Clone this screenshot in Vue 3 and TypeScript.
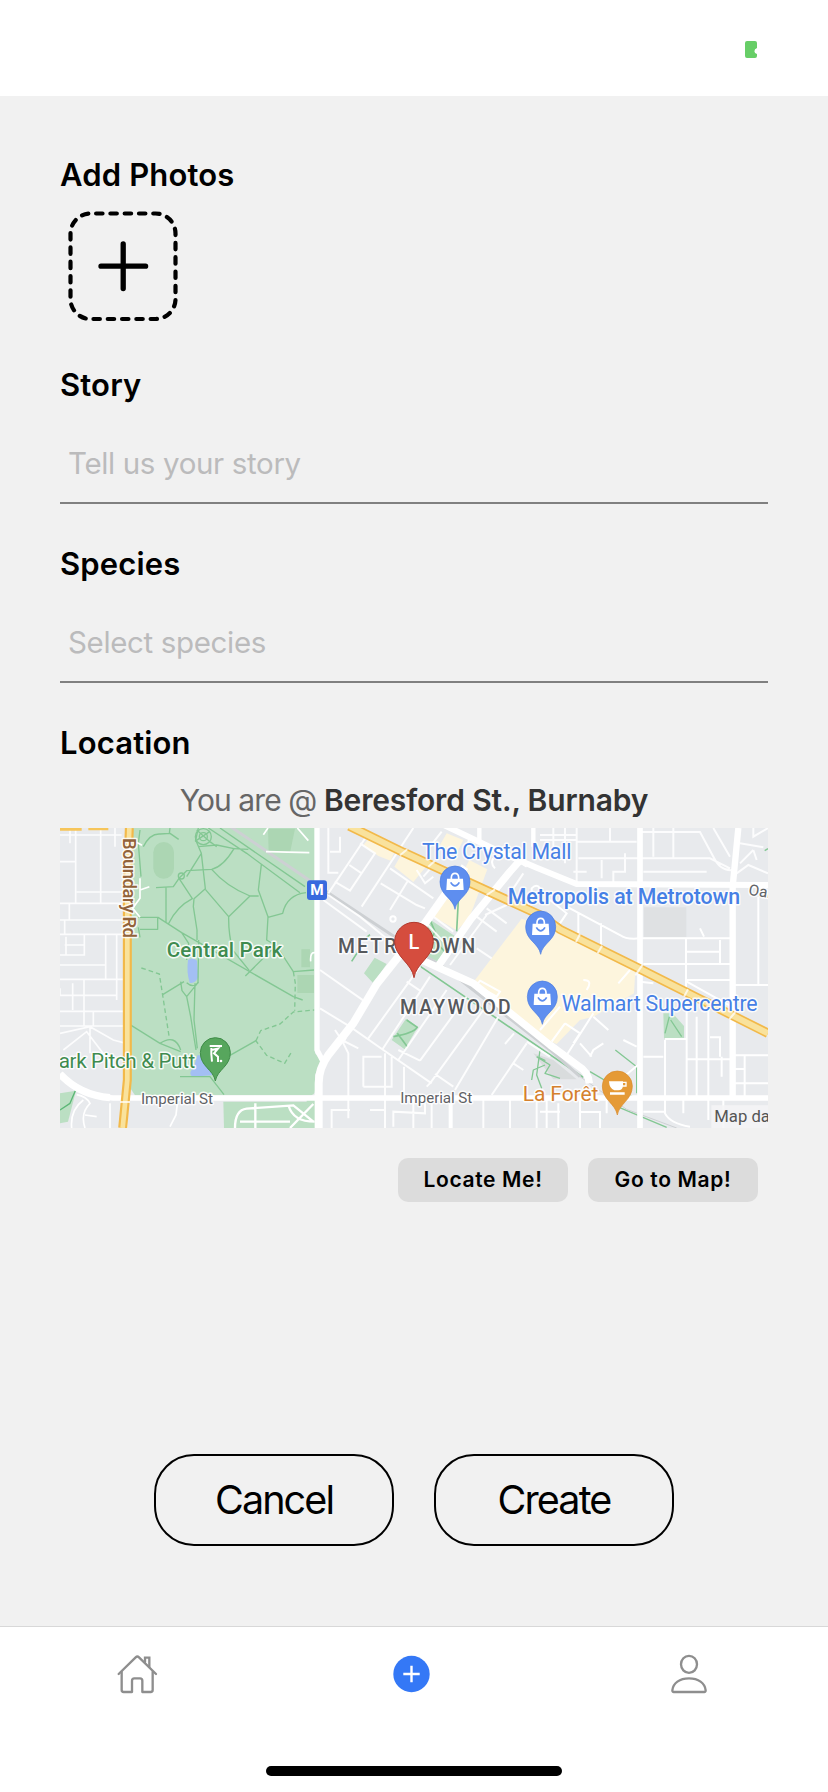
<script setup lang="ts">
import { ref } from 'vue'

const story = ref('')
const species = ref('')
const address = ref('Beresford St., Burnaby')

interface ShopPin {
  x: number
  y: number
}

const shopPins: ShopPin[] = [
  { x: 1185, y: 185 },
  { x: 1442, y: 320 },
  { x: 1447, y: 530 },
]
</script>

<template>
  <div class="screen">
    <header class="status">
      <svg class="battery" viewBox="0 0 12 17" aria-hidden="true">
        <path d="M2 0h8q2 0 2 2v5q-2.600 1-2.600 3.200T12 13v2q0 2-2 2H2q-2 0-2-2V2Q0 0 2 0z" fill="#67ce67" />
      </svg>
    </header>

    <main class="form">
      <h2 class="label">Add Photos</h2>
      <button class="add" aria-label="Add photo">
        <svg viewBox="60 195 130 140">
          <path
            d="M96.100 213.500H155.500A20 20 0 0 1 175.500 233.500V299A20 20 0 0 1 155.500 319H90.500A20 20 0 0 1 70.500 299V233.500A20 20 0 0 1 90.500 213.500Z"
            pathLength="270" fill="none" stroke="#000" stroke-width="4.200" stroke-linecap="round" stroke-dasharray="4.500 5.500"
          />
          <path d="M123.200 244v44.500M101 266.200h44.600" fill="none" stroke="#000" stroke-width="5.300" stroke-linecap="round" />
        </svg>
      </button>

      <h2 class="label">Story</h2>
      <input v-model="story" class="field" placeholder="Tell us your story" />

      <h2 class="label next">Species</h2>
      <input v-model="species" class="field" placeholder="Select species" />

      <h2 class="label next">Location</h2>
      <p class="where"><span class="you">You are @ </span><strong>{{ address }}</strong></p>

      <svg class="map" viewBox="0 24 2124 900">
        <rect y="24" width="2124" height="900" fill="#e8eaed" />
        <!-- parks and water -->
        <g fill="#bbdfc3">
          <path d="M210 24H765V812Q765 826 745 826H225L208 800Z" />
          <path d="M490 845H768V924H492Z" />
          <path d="M765 24V700L785 722L765 765Z" />
          <path d="M0 820L48 812L24 905L0 910Z" />
          <path d="M766 830V924H740V840Z" />
          <path d="M912 460L944 413L980 432L940 490ZM995 660L1038 596L1074 620L1034 688ZM1095 320L1112 300L1184 348L1132 424L1104 412Z" />
          <path d="M1810 580H1838L1872 618V655H1812Z" />
        </g>
        <g fill="#acd6b3">
          <rect x="280" y="66" width="62" height="110" rx="31" />
          <path d="M624 26H705L690 98H626ZM724 388h26v54h-26zM712 465h50v54h-50z" />
        </g>
        <g fill="#a3bff4">
          <path d="M384 420q14-10 27 2l4 50q-10 20-26 16q-10-30-5-68z" />
          <path d="M412 706h24l16 48q12 0 3 12l-58 4q-14-10 4-26z" />
        </g>
        <g fill="#fdf5dd">
          <path d="M910 75L932 48L1010 82L992 122L955 108ZM1003 140L1032 90L1108 128L1060 186ZM1122 290L1170 222L1244 250L1192 332ZM1200 175L1228 120L1282 148L1240 262L1225 300L1190 330L1120 290ZM1140 75L1160 40L1210 60L1190 100Z" />
          <path d="M1245 480L1385 296L1500 335L1726 452L1722 520L1600 590L1560 600L1490 672L1440 650Z" />
        </g>
        <path d="M1752 262h127v90H1752z" fill="#dfe1e3" />
        <path d="M1420 700l60 20l70 58l-70 0z" fill="#d9dcdd" />

        <!-- park footpaths -->
        <g fill="none" stroke="#83c793" stroke-width="4" stroke-linejoin="round">
          <path d="M240 30L235 70L243 170M250 80Q270 40 300 42L330 40L356 58M415 24L407 60L424 100L436 206L402 236L400 260L411 330V360M330 24L328 40M288 203L340 200L357 175L380 152L455 148Q490 140 522 86L470 75L415 80M424 100L380 170M357 175L397 236Q350 260 325 312M318 203V306M235 292H294L365 338L700 530L728 540M240 328H293V292M235 322l5 30M365 338L386 370L380 420M416 360L414 490" />
          <path d="M436 208L506 290Q505 340 518 390L568 452M506 290L570 228H596M455 148Q500 200 570 228M604 134L595 210L624 290L620 360L650 378L700 455L762 450M624 292L668 280Q680 225 738 218M640 385L556 468M445 24L560 100L720 218M480 24L735 200M522 86L565 88" />
          <circle cx="430" cy="50" r="24" />
          <circle cx="430" cy="50" r="12" />
          <path d="M410 30L455 70M405 64L450 34M452 66L470 80" />
          <circle cx="364" cy="168" r="9" />
          <path d="M380 488q20 18 34 0L380 530L392 590L408 690M405 490L402 600L412 685M308 524L372 485M210 614L300 670L362 695M300 670Q345 640 362 690M362 485L366 512L380 530M510 706L588 662M360 770H450L492 824" />
          <path d="M244 444L298 462L328 654M588 662L602 632L660 612L700 576L764 570M586 660L620 706L674 730L696 694M700 455L706 490L704 572" stroke-dasharray="14 9" />
          <path d="M46 812L30 850L0 870M765 176h10M765 446h10M765 568h10" stroke="#5cb777" />
          <path d="M1110 300L1125 335L1115 355L1160 400M1190 334L1195 240M875 424L892 398M920 352l10-8M1000 650Q1060 640 1072 622L1040 600M1012 640L1042 680M1082 440L1570 772" stroke-width="5" />
          <path d="M1590 755L1735 840M1666 690L1730 740V820M1672 860L1820 922M1430 710L1470 735L1455 760L1500 775M1455 735L1420 750L1415 780M1440 690L1430 765L1445 805M1828 590L1815 640M1832 600L1865 650" />
          <path d="M1436 712L1456 722M2114 92l10-6" />
        </g>

        <!-- rail -->
        <g fill="none" stroke="#cdd0d3">
          <path d="M500 12L750 182L1000 348L1160 448L1470 690L1560 770" stroke-width="9" />
          <path d="M1560 770L1700 868L1850 924" stroke-width="3" />
        </g>

        <!-- side streets -->
        <g fill="none" stroke="#fff" stroke-width="5">
          <path d="M47 24V248M122 24V248M0 45H185M0 125H48M50 216H190M0 250H185M0 300H190M0 343H190M14 300V343M28 250V300M73 345V405H0M18 350V405M137 345V476M170 345V540M0 435H137M0 478H198M0 526H170M0 574H198M0 505V526M38 490V570M72 478V620M0 618H198M165 24V80M14 375H72M0 640L90 620L160 660L198 670M90 620V700M10 690L80 635L160 740M30 24V70M100 574V618" stroke-opacity=".85" />
          <path d="M228 66l18 10M240 175V235L218 265L240 292M240 210l28-10M610 44L624 24M618 95L748 98M712 24L745 62M752 424Q750 395 765 398" />
          <path d="M50 824Q80 830 90 850Q60 880 75 924M35 924Q30 870 70 840M150 850V924M200 850V924M352 850L348 885L330 920M75 885L110 890" />
          <path d="M525 924Q525 870 560 866L700 856L760 905M586 850V924M686 858Q700 905 764 905M760 852L690 924M540 905H690" stroke-width="7" />
        </g>
        <g fill="none" stroke="#fff" stroke-width="6" transform="translate(750 0)">
          <path d="M55 220L170 48M74 185L120 212L195 100L150 70M118 135L155 160M155 260L310 24M240 145L370 235M240 270L295 180M212 190L320 255L345 265M55 24V158H85M60 95H90V50M55 225L150 290L235 360M40 240L170 335M30 450L165 545M30 565L120 620L220 690L365 790M118 628L100 670L115 700V835M175 655L330 440M216 690L360 470M265 720L410 510M360 790L520 570M435 810L565 590M545 825L650 670M330 722L470 530M290 485L330 512M265 690L330 722M375 762L430 800M365 785L350 800M650 665L720 710M610 730L640 750M585 672L612 640M400 365L350 310M370 290L430 335M420 435L530 285M500 385L545 415M500 290L560 335M530 265L590 310M525 285L590 255M640 160L600 220M480 50L470 80M395 35L360 80M420 840V924M365 845V924M520 840V924M600 840V924M680 840V924M225 700V924M282 740V835M160 800V710H215M160 800H245V710M65 924V870H120M115 835V895M250 920V875L345 880V850M310 840V924M180 870H225M75 630L95 660L145 685M320 150L345 190L370 170M340 170L375 130" stroke-opacity=".88" />
          <circle cx="249" cy="297" r="8" />
          <path d="M510 482L570 515L560 530L500 495ZM585 100L650 140M690 205Q680 190 665 205V230M550 115Q540 130 555 145" />
        </g>
        <g fill="none" stroke="#fff" stroke-width="6" transform="translate(1440 0)">
          <path d="M0 45H110M110 24V190M115 115H510L570 145M300 36H480L520 110Q540 155 580 150M520 24L570 110M600 70L670 82M340 24V110M400 24V115M110 65H290M140 155H100M220 190V155H255V100M185 120V175M310 155H500M210 24V65M640 24V50L684 24M640 90L600 130M640 90L650 120M590 160L625 135L684 160M0 60H110M40 24V90M75 24V130" stroke-opacity=".85" />
          <path d="M80 260L240 345Q260 360 300 355H578M115 280V345M183 310V380M30 240L80 280L60 310M438 355V510M310 432H578M440 395H540M540 360V435M440 480H578M440 485L575 560M300 485L340 490M655 230V495M580 495H684M470 590V835M440 560V835M505 560V835M375 660V880Q390 910 450 920M375 657H438M310 710H370M440 718H578M510 652H540V710M580 706H684M614 706V835M584 747H614M580 790H684M545 710V770M300 730L240 780M80 705L160 580M75 610L120 640L100 670M35 665L75 610M160 590L205 630M150 710L160 690L190 670M250 660L290 680M120 670L155 710M0 630L60 560M130 480Q160 480 140 510M235 490L270 450M480 325L492 350M550 835V924M505 835V900M430 835V880M120 876H180V924M120 835V924M55 850V924M0 875H60M20 835V924M200 840V880M310 875H375" />
        </g>

        <!-- main streets -->
        <g fill="none" stroke="#fff" stroke-linejoin="round">
          <path d="M0 762Q65 828 160 834H2124" stroke-width="16" />
          <path d="M0 762Q60 826 150 833" stroke-width="22" />
          <path d="M771 24V690L788 722" stroke-width="16" />
          <path d="M776 924V790Q776 745 805 705L880 610L950 492L1095 310L1215 140" stroke-width="24" />
          <path d="M1130 445L1232 298L1350 155L1390 110" stroke-width="22" />
          <path d="M1145 12L1340 105L1430 143L1550 192L2124 195" stroke-width="18" />
          <path d="M1258 24V65M1420 24V80" stroke-width="13" />
          <path d="M1085 420L1240 490L1470 675L1555 738Q1585 755 1588 790" stroke-width="22" />
          <path d="M1740 24V924" stroke-width="17" />
          <path d="M2035 24L2018 200V830" stroke-width="19" />
          <path d="M1172 835V924" stroke-width="12" />
        </g>

        <!-- arterials -->
        <g fill="none">
          <path d="M208 24L202 200V780L188 924" stroke="#f2b94a" stroke-width="27" />
          <path d="M208 24L202 200V780L188 924" stroke="#f9e29c" stroke-width="14" />
          <path d="M0 28H65M85 26H145" stroke="#f6c55a" stroke-width="9" />
          <path d="M868 18L1030 97L1440 285L1500 328L1740 447L2124 640" stroke="#f2b94a" stroke-width="28" />
          <path d="M868 18L1030 97L1440 285L1500 328L1740 447L2124 640" stroke="#f9e29c" stroke-width="18" />
          <path d="M1020 106L1042 88M1105 140L1125 122M1280 225L1305 208M1548 366L1560 342M1613 400L1626 377M1726 466L1748 434M1872 530L1884 508M2008 598L2026 576M180 846H210" stroke="#fff" stroke-width="6" opacity=".75" />
        </g>

        <!-- transit badge -->
        <rect x="741" y="181" width="60" height="59" rx="9" fill="#3869de" />
        <text class="badge" x="771" y="226" text-anchor="middle">M</text>

        <!-- map labels -->
        <g class="names">
          <text class="road brown" transform="translate(188 54) rotate(90)" textLength="300">Boundary Rd</text>
          <text class="park" x="320" y="411" textLength="347">Central Park</text>
          <text class="park thin" x="-4" y="743" textLength="410">ark Pitch &amp; Putt</text>
          <text class="street" x="243" y="852" textLength="216">Imperial St</text>
          <text class="street" x="1021" y="850" textLength="216">Imperial St</text>
          <text class="street" x="2064" y="224" transform="rotate(9 2064 224)">Oak</text>
          <text class="area" x="834" y="399" textLength="412">METROTOWN</text>
          <text class="area" x="1020" y="583" textLength="332">MAYWOOD</text>
          <text class="shop" x="1086" y="118" textLength="448">The Crystal Mall</text>
          <text class="shop bold" x="1343" y="253" textLength="697">Metropolis at Metrotown</text>
          <text class="shop" x="1505" y="573" textLength="588">Walmart Supercentre</text>
          <text class="food" x="1388" y="843" textLength="227">La Forêt</text>
        </g>
        <path d="M1954 856H2124V924H1954Z" fill="#f5f5f6" fill-opacity=".85" />
        <text class="credit" x="1963" y="906">Map data</text>

        <!-- shop pins -->
        <g v-for="pin in shopPins" :key="pin.x" :transform="`translate(${pin.x} ${pin.y})`">
          <path d="M0 83C-6 48-45 42-45 0A45 47 0 1 1 45 0C45 42 6 48 0 83Z" fill="#5e8eef" stroke="#4c7ce0" stroke-width="2" />
          <path d="M-24-9H24L26 25H-26Z" fill="#fff" />
          <path d="M-11-7V-13Q-10-25 0-25T11-13V-7" fill="none" stroke="#fff" stroke-width="5" />
          <path d="M-13 2Q0 23 13 2" fill="none" stroke="#5e8eef" stroke-width="5" />
        </g>
        <!-- golf pin -->
        <g transform="translate(466 698)">
          <path d="M0 85C-6 50-45 42-45 0A45 45 0 1 1 45 0C45 42 6 50 0 85Z" fill="#57a65d" stroke="#3f8c48" stroke-width="3" />
          <path d="M-17-20H20M-12-14V6M-12-8L8-12L-4 2L8 12V28M-12 4L-10 27" fill="none" stroke="#fff" stroke-width="6" />
          <circle cx="17" cy="25" r="4" fill="#fff" />
        </g>
        <!-- cafe pin -->
        <g transform="translate(1672 798)">
          <path d="M0 87C-6 52-45 42-45 0A45 45 0 1 1 45 0C45 42 6 52 0 87Z" fill="#e59a36" stroke="#d98a2b" stroke-width="2" />
          <path d="M-25-14H17V0Q15 13 3 13H-9Q-24 8-25-14ZM-22 19H22V26H-22Z" fill="#fff" />
          <path d="M16-11H26V0H15" fill="none" stroke="#fff" stroke-width="4" />
        </g>
        <!-- current location -->
        <path d="M1062 473C1056 430 1004 410 1004 365A58 58 0 1 1 1120 365C1120 410 1068 430 1062 473Z" fill="#d54d3e" stroke="#b23a2e" stroke-width="3" />
        <text class="pin-letter" x="1062" y="387" text-anchor="middle">L</text>
      </svg>

      <div class="map-actions">
        <button class="small">Locate Me!</button>
        <button class="small">Go to Map!</button>
      </div>

      <div class="actions">
        <button class="big">Cancel</button>
        <button class="big">Create</button>
      </div>
    </main>

    <footer class="dock">
      <nav class="tabs">
        <svg class="tab" viewBox="0 0 192 192" fill="none" stroke="#8e8e8e" stroke-width="7" stroke-linejoin="round" stroke-linecap="round">
          <path d="M38 102L89 52Q94 47 99 52L150 102" />
          <path d="M47 96V150Q47 156 53 156H78V122Q78 115 85 115H102Q109 115 109 122V156H134Q140 156 140 150V96" />
          <path d="M117 66V53H130V80" stroke-linejoin="miter" />
        </svg>
        <svg class="tab" viewBox="0 0 64 64">
          <circle cx="30.500" cy="34" r="18.200" fill="#3478f6" />
          <path d="M30.500 25.800V42.200M22.300 34H38.700" stroke="#fff" stroke-width="2.400" />
        </svg>
        <svg class="tab" viewBox="0 0 192 192" fill="none" stroke="#8e8e8e" stroke-width="7" stroke-linejoin="round">
          <ellipse cx="99" cy="73" rx="24" ry="25.500" />
          <path d="M53 156Q49 156 49 151C51 129 71 115 99 115S147 129 149 151Q149 156 145 156Z" />
        </svg>
      </nav>
      <div class="home-bar"></div>
    </footer>
  </div>
</template>

<style>
body {
  margin: 0;
  background: #f1f1f1;
}
</style>

<style scoped>
.screen {
  width: 828px;
  height: 1792px;
  display: flex;
  flex-direction: column;
  overflow: hidden;
  background: #f1f1f1;
  font-family: Inter, "Liberation Sans", sans-serif;
  color: #000;
}
.status {
  height: 96px;
  box-sizing: border-box;
  padding: 41px 71px 0 0;
  display: flex;
  justify-content: flex-end;
  background: #fff;
}
.battery {
  width: 12px;
  height: 17px;
}
.form {
  flex: 1;
  min-height: 0;
  box-sizing: border-box;
  padding: 59px 60px 80px;
  display: flex;
  flex-direction: column;
}
.label {
  margin: 0;
  font-size: 31px;
  line-height: 40px;
  font-weight: 600;
  letter-spacing: 0.150px;
}
.next {
  margin-top: 40px;
}
.add {
  width: 130px;
  height: 140px;
  margin: 0 0 30px;
  padding: 0;
  border: 0;
  background: none;
}
.add svg {
  display: block;
  width: 130px;
  height: 140px;
}
.field {
  height: 99px;
  box-sizing: border-box;
  padding: 38px 8px 19px;
  border: 0;
  border-bottom: 2px solid #808080;
  border-radius: 0;
  outline: 0;
  background: transparent;
  font-family: inherit;
  font-size: 29.500px;
  letter-spacing: -0.350px;
}
.field::placeholder {
  color: #bbbbbc;
  opacity: 1;
}
.where {
  margin: 13px 0 4px;
  font-size: 30px;
  line-height: 48px;
  text-align: center;
  white-space: nowrap;
}
.you {
  color: #666;
  letter-spacing: -0.900px;
}
.where strong {
  font-weight: 600;
  color: #333;
  letter-spacing: -0.150px;
}
.map {
  display: block;
  width: 708px;
  height: 300px;
  flex: none;
  font-family: Roboto, "Liberation Sans", sans-serif;
}
.badge {
  font-size: 46px;
  font-weight: 700;
  fill: #fff;
}
.names text {
  paint-order: stroke;
  stroke: #fff;
  stroke-opacity: 0.85;
  stroke-width: 9px;
  stroke-linejoin: round;
}
.road {
  font-size: 56px;
}
.brown {
  font-weight: 500;
  fill: #92633a;
}
.park {
  font-size: 62px;
  font-weight: 500;
  fill: #3f8b4f;
}
.thin {
  font-weight: 400;
}
.street {
  font-size: 46px;
  fill: #5f6266;
}
.area {
  font-size: 58px;
  font-weight: 500;
  fill: #56595d;
}
.shop {
  font-size: 64px;
  fill: #4680e5;
}
.bold {
  font-weight: 500;
}
.food {
  font-size: 63px;
  fill: #d5812d;
}
.credit {
  font-size: 50px;
  fill: #555;
}
.pin-letter {
  font-size: 60px;
  font-weight: 500;
  fill: #fff;
}
.map-actions {
  display: flex;
  justify-content: flex-end;
  gap: 20px;
  margin-top: 30px;
  padding-right: 10px;
}
.small {
  width: 170px;
  height: 44px;
  padding: 0 0 2px;
  border: 0;
  border-radius: 10px;
  background: #dcdcdc;
  color: #000;
  font-family: inherit;
  font-size: 21px;
  font-weight: 600;
  letter-spacing: 0.650px;
}
.actions {
  display: flex;
  justify-content: center;
  gap: 40px;
  margin-top: auto;
}
.big {
  width: 240px;
  height: 92px;
  padding: 0;
  border: 2px solid #000;
  border-radius: 40px;
  background: none;
  color: #000;
  font-family: inherit;
  font-size: 39.500px;
  letter-spacing: -1.900px;
}
.dock {
  height: 166px;
  box-sizing: border-box;
  padding-bottom: 16px;
  border-top: 1px solid #d8d8d8;
  background: #fff;
  display: flex;
  flex-direction: column;
  align-items: center;
  justify-content: space-between;
}
.tabs {
  align-self: stretch;
  display: flex;
  justify-content: space-between;
  padding: 13px 108px 0 106px;
}
.tab {
  width: 64px;
  height: 64px;
}
.home-bar {
  width: 296px;
  height: 10px;
  border-radius: 5px;
  background: #000;
}
</style>
